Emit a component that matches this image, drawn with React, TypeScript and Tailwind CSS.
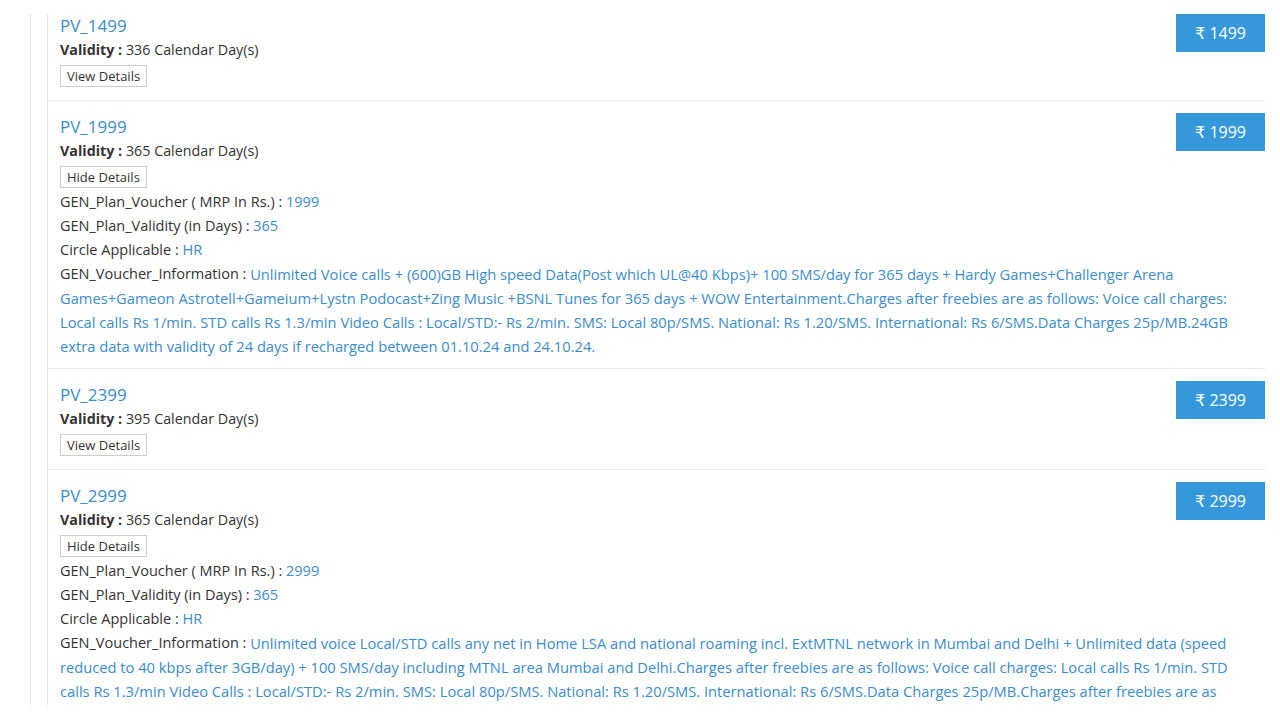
import React, { useState } from 'react'

type Plan = {
  name: string
  price: number
  validity: number
  circle: string
  info: string
  open: boolean
}

const PLANS: Plan[] = [
  {
    name: 'PV_1499',
    price: 1499,
    validity: 336,
    circle: 'HR',
    info: 'Unlimited Voice calls + 24GB/day High speed Data + 100 SMS/day for 336 days.',
    open: false,
  },
  {
    name: 'PV_1999',
    price: 1999,
    validity: 365,
    circle: 'HR',
    info: 'Unlimited Voice calls + (600)GB High speed Data(Post which UL@40 Kbps)+ 100 SMS/day for 365 days + Hardy Games+Challenger Arena Games+Gameon Astrotell+Gameium+Lystn Podocast+Zing Music +BSNL Tunes for 365 days + WOW Entertainment.Charges after freebies are as follows: Voice call charges: Local calls Rs 1/min. STD calls Rs 1.3/min Video Calls : Local/STD:- Rs 2/min. SMS: Local 80p/SMS. National: Rs 1.20/SMS. International: Rs 6/SMS.Data Charges 25p/MB.24GB extra data with validity of 24 days if recharged between 01.10.24 and 24.10.24.',
    open: true,
  },
  {
    name: 'PV_2399',
    price: 2399,
    validity: 395,
    circle: 'HR',
    info: 'Unlimited Voice calls + 2GB/day High speed Data + 100 SMS/day for 395 days.',
    open: false,
  },
  {
    name: 'PV_2999',
    price: 2999,
    validity: 365,
    circle: 'HR',
    info: 'Unlimited voice Local/STD calls any net in Home LSA and national roaming incl. ExtMTNL network in Mumbai and Delhi + Unlimited data (speed reduced to 40 kbps after 3GB/day) + 100 SMS/day including MTNL area Mumbai and Delhi.Charges after freebies are as follows: Voice call charges: Local calls Rs 1/min. STD calls Rs 1.3/min Video Calls : Local/STD:- Rs 2/min. SMS: Local 80p/SMS. National: Rs 1.20/SMS. International: Rs 6/SMS.Data Charges 25p/MB.Charges after freebies are as follows: Voice call charges: Local calls Rs 1/min. STD calls Rs 1.3/min Video Calls : Local/STD:- Rs 2/min.',
    open: true,
  },
]

function PlanRow({ plan, first }: { plan: Plan; first: boolean }) {
  const [open, setOpen] = useState(plan.open)

  return (
    <div
      className={`border-b border-[#ebebeb] pl-3 ${open ? 'pb-[10px]' : 'pb-3'} ${first ? '-mt-[14px]' : ''}`}
    >
      <button
        type="button"
        className={`float-right ${first ? 'mt-[14px]' : 'mt-3'} w-[89px] h-[38px] bg-[#3498db] text-white text-[16px] leading-[38px] text-center`}
      >
        ₹ {plan.price}
      </button>
      <div className="pt-[14px]">
        <div className="text-[17px] leading-[24px] text-[#3a8ccc]">{plan.name}</div>
        <div className="text-[14.3px] leading-[24px] text-[#333]">
          <span className="font-bold">Validity : </span>
          {plan.validity} Calendar Day(s)
        </div>
        <button
          type="button"
          onClick={() => setOpen(!open)}
          className={`mt-[3px] ${open ? 'mb-[2px]' : 'mb-px'} h-[22px] px-[6px] border border-[#cccccc] bg-white text-[13px] leading-[20px] text-[#333]`}
        >
          {open ? 'Hide Details' : 'View Details'}
        </button>
        {open && (
          <div className="pr-[15px] text-[14.5px] leading-[24px] text-[#333]">
            <div>
              GEN_Plan_Voucher ( MRP In Rs.) : <span className="text-[#3a8ccc]">{plan.price}</span>
            </div>
            <div>
              GEN_Plan_Validity (in Days) : <span className="text-[#3a8ccc]">{plan.validity}</span>
            </div>
            <div>
              Circle Applicable : <span className="text-[#3a8ccc]">{plan.circle}</span>
            </div>
            <div>
              GEN_Voucher_Information :{' '}
              <span className="text-[14.7px] leading-[24px] align-top text-[#3a8ccc]">{plan.info}</span>
            </div>
          </div>
        )}
      </div>
    </div>
  )
}

export default function App() {
  return (
    <div
      className="h-[705px] overflow-hidden bg-white pt-[14px]"
      style={{ fontFamily: '"Open Sans", "DejaVu Sans", sans-serif' }}
    >
      <div className="ml-[30px] h-full border-l border-[#e2e2e2]">
        <div className="ml-4 mr-[15px] h-full flex flex-col border-l border-[#e6e6e6]">
          {PLANS.map((p, i) => (
            <PlanRow key={p.name} plan={p} first={i === 0} />
          ))}
        </div>
      </div>
    </div>
  )
}
